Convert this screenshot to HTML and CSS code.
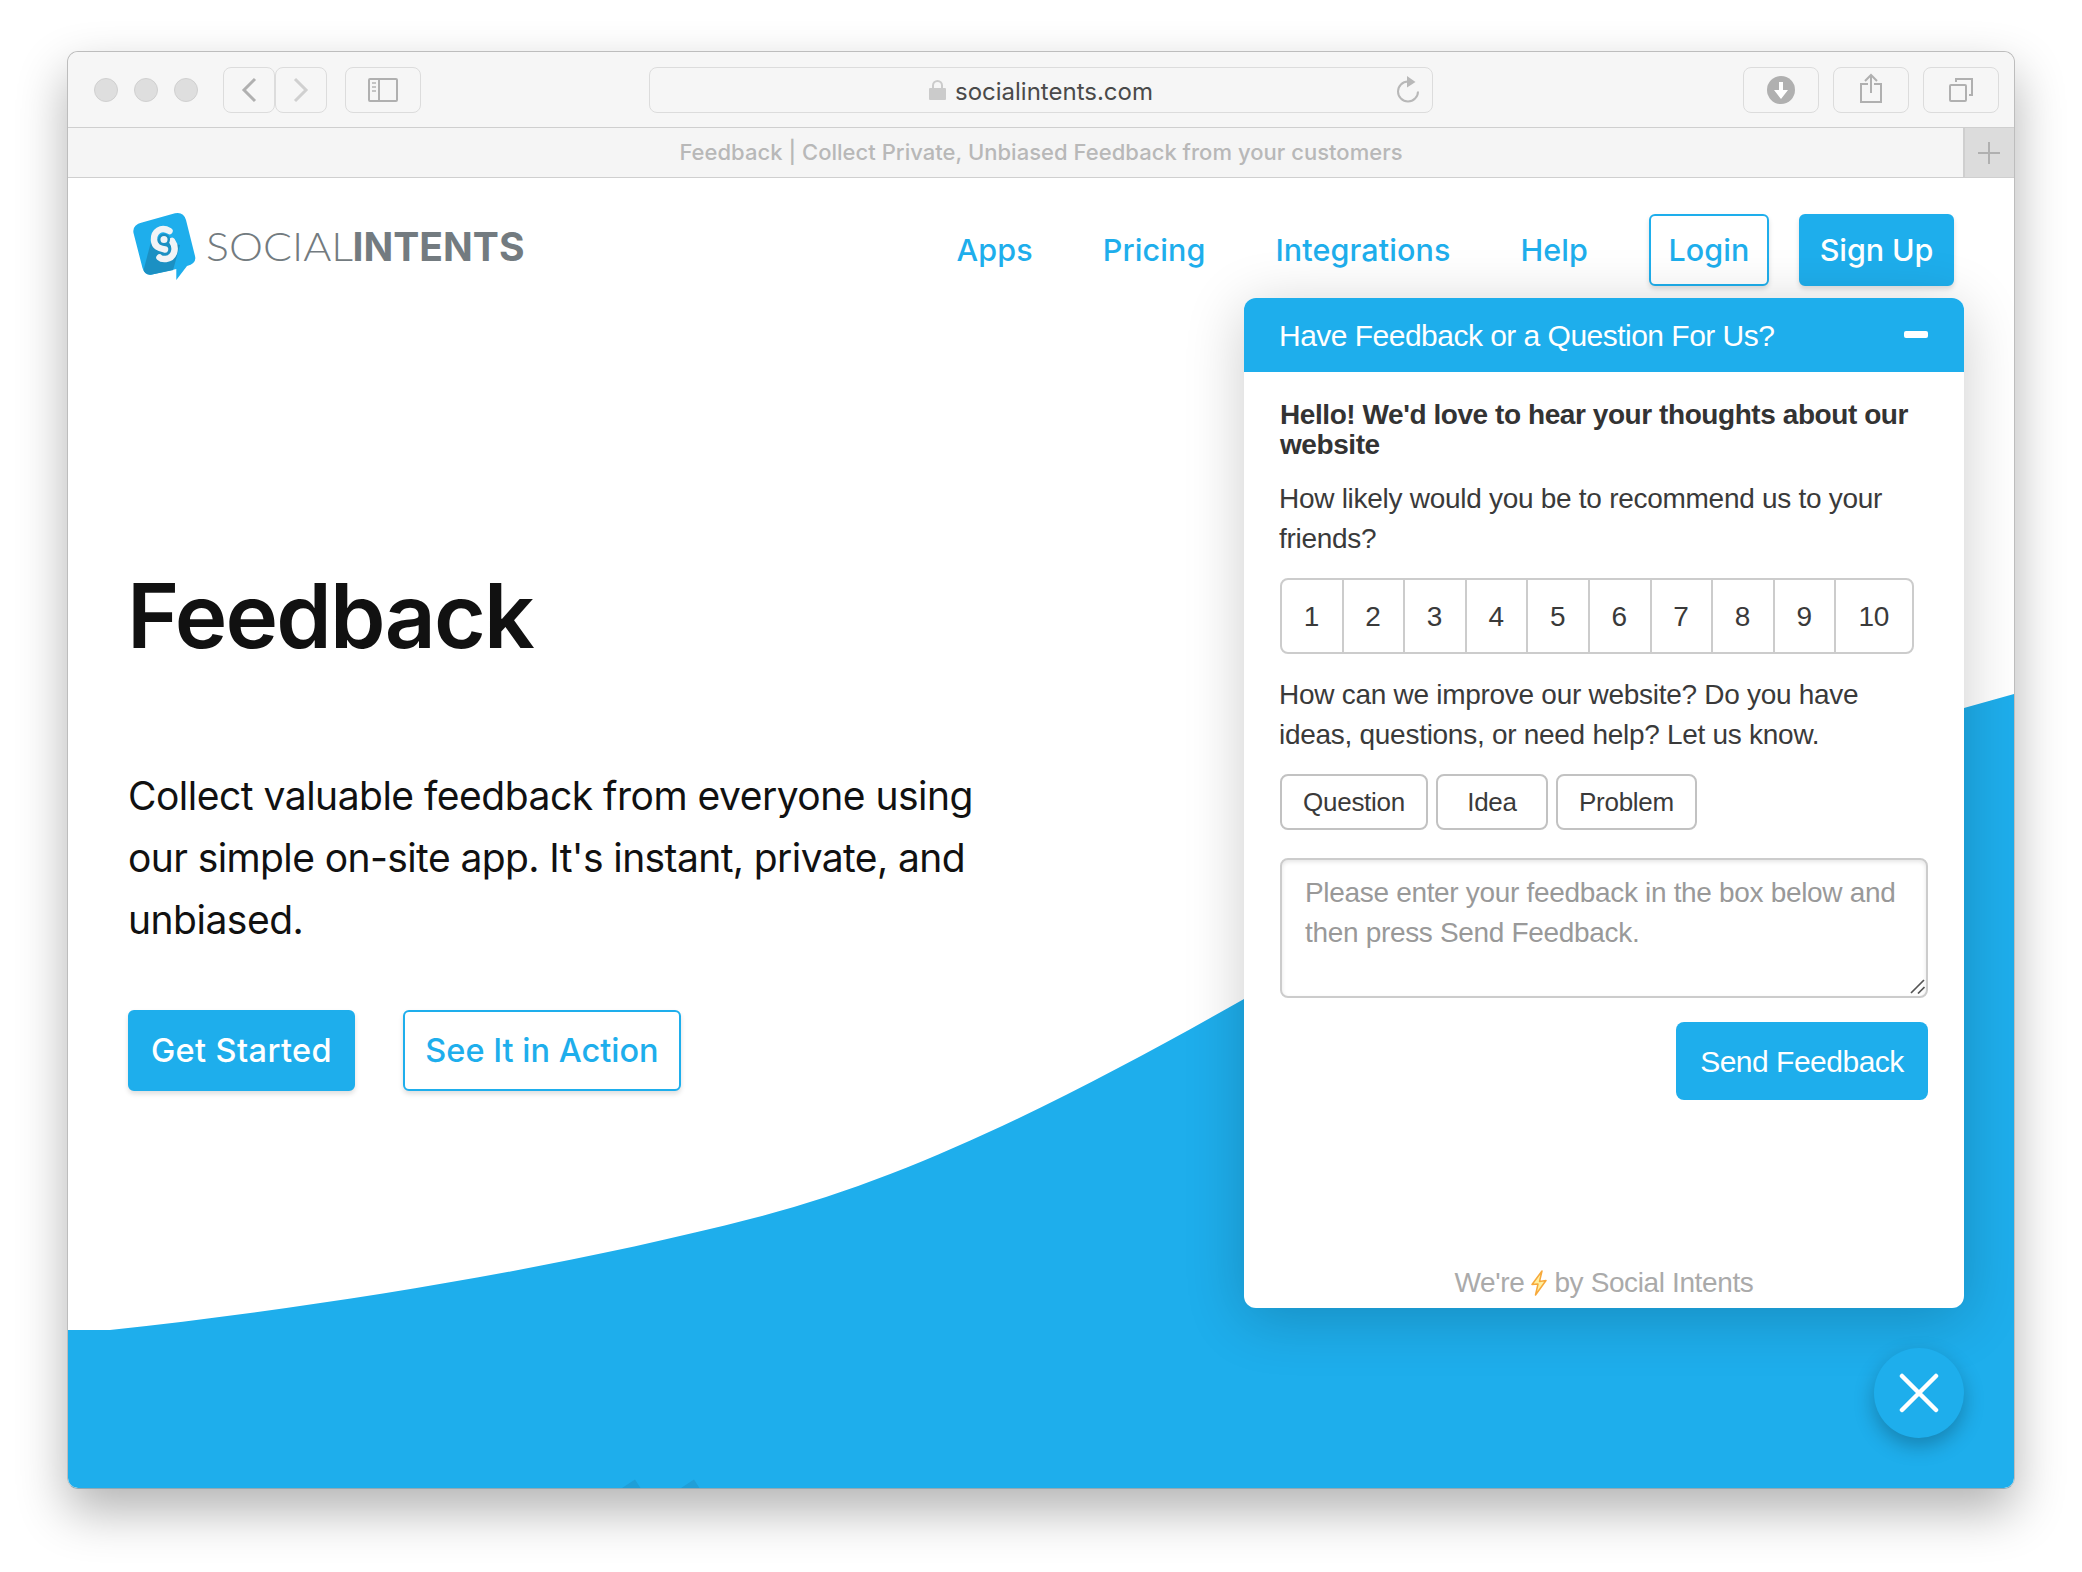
FILE: index.html
```html
<!DOCTYPE html>
<html lang="en">
<head>
<meta charset="utf-8">
<title>Feedback | Collect Private, Unbiased Feedback from your customers</title>
<link rel="stylesheet" href="styles.css">
</head>
<body>
<div class="window">
  <div class="toolbar">
    <div class="lights"><span class="light"></span><span class="light"></span><span class="light"></span></div>
    <div class="history">
      <div class="tool tool-small"><svg width="16" height="26" viewBox="0 0 16 26" fill="none" stroke="#b0b0b0" stroke-width="3"><path d="M14 2 3 13 14 24"/></svg></div>
      <div class="tool tool-small"><svg width="16" height="26" viewBox="0 0 16 26" fill="none" stroke="#d0d0d0" stroke-width="3"><path d="M2 2 13 13 2 24"/></svg></div>
    </div>
    <div class="tool"><svg width="30" height="24" viewBox="0 0 30 24" fill="none" stroke="#b0b0b0" stroke-width="2"><rect x="1" y="1" width="28" height="22" rx="1"/><path d="M11 1V23"/><path d="M4 5h4M4 9h4M4 13h4" stroke="#c4c4c4"/></svg></div>
    <div class="address">
      <svg width="17" height="20" viewBox="0 0 17 20"><path d="M4 9V5.500a4.500 4.500 0 0 1 9 0V9" fill="none" stroke="#cbcbcb" stroke-width="2"/><rect x="0" y="8" width="17" height="12" rx="1" fill="#cbcbcb"/></svg>
      <span class="host">socialintents.com</span>
      <svg class="reload" width="24" height="28" viewBox="0 0 24 28"><path d="M12 5.500A10 10 0 1 0 22 15.500" fill="none" stroke="#b8b8b8" stroke-width="2"/><path d="M11 0 19.500 6 11 11.500z" fill="#b8b8b8"/></svg>
    </div>
    <div class="tools-right">
      <div class="tool"><svg width="28" height="28" viewBox="0 0 28 28"><circle cx="14" cy="14" r="14" fill="#b0b0b0"/><path d="M12 6h4v8h5l-7 9-7-9h5z" fill="#fff"/></svg></div>
      <div class="tool"><svg class="share" width="24" height="30" viewBox="0 0 24 30" fill="none" stroke="#b0b0b0" stroke-width="2"><path d="M9 11H2V29H22V11H15M12 20V1.500M6 8l6-6 6 6"/></svg></div>
      <div class="tool"><svg width="24" height="24" viewBox="0 0 24 24" fill="none" stroke="#b0b0b0" stroke-width="2"><rect x="1" y="7" width="16" height="16" rx="1"/><path d="M7 4V1H23V17H20"/></svg></div>
    </div>
  </div>
  <div class="tabbar">
    <div class="tab">Feedback | Collect Private, Unbiased Feedback from your customers</div>
    <div class="newtab"><svg width="22" height="22" viewBox="0 0 22 22" stroke="#b0b0b0" stroke-width="2"><path d="M0 11H22M11 0V22"/></svg></div>
  </div>

  <div class="page">
    <svg class="wave" width="1946" height="1310" viewBox="68 178 1946 1310">
      <path d="M68 1330H110C330 1306 560 1268 754 1218C920 1176 1090 1086 1244 999C1480 866 1660 790 1964 708L2014 694V1488H68Z" fill="#1eaeec"/>
      <path d="M622 1488 635 1479.500 640.500 1488ZM681 1488 694 1479.500 699.500 1488Z" fill="#1f9fd8"/>
    </svg>

    <header class="header">
      <svg class="logo" width="410" height="72" viewBox="130 210 410 72">
        <defs><clipPath id="tile"><path d="M142 222 175 213.300Q183 211.500 185.500 219L195 256Q197 263.500 188 266L176 269.500 152 274.500Q145 276 142.500 268L133.500 233Q132 225 142 222Z"/></clipPath></defs>
        <path d="M142 222.500 175 213.300Q183.500 211.500 186 220L195 256Q197 263.500 187 266L176.300 280V269L152 274.500Q145 276 142.500 268L133.500 233Q132 225 142 222.500Z" fill="#1eaeec"/>
        <path d="M152 238 142 276 172 274 180 245Z" fill="#1b90c3" clip-path="url(#tile)"/>
        <path d="M169.500 231C161 226 153.500 231.500 154 240C154.500 248 161 248.500 165 249.500" fill="none" stroke="#f0f3f6" stroke-width="6.500" stroke-linecap="round"/>
        <path d="M172 241C177 248 174.500 258 166 259C162 259.500 160.500 258.500 159.500 257.500" fill="none" stroke="#f0f3f6" stroke-width="6.500" stroke-linecap="round"/>
        <circle cx="164" cy="239.500" r="4.800" fill="#f0f3f6" stroke="#1b90c3" stroke-width="2.500"/>
        <text class="logo-thin" x="206" y="260.500" textLength="147" lengthAdjust="spacingAndGlyphs">SOCIAL</text>
        <text class="logo-bold" x="352.500" y="260.500" textLength="172" lengthAdjust="spacingAndGlyphs">INTENTS</text>
      </svg>
      <nav class="nav">
        <a>Apps</a><a>Pricing</a><a>Integrations</a><a>Help</a>
      </nav>
      <a class="btn btn-line login">Login</a>
      <a class="btn btn-fill signup">Sign Up</a>
    </header>

    <section class="hero">
      <h1>Feedback</h1>
      <p>Collect valuable feedback from everyone using<br><span class="tight">our simple on-site app. It's instant, private, and</span><br>unbiased.</p>
      <div class="actions">
        <a class="btn btn-fill start">Get Started</a>
        <a class="btn btn-line action">See It in Action</a>
      </div>
    </section>

    <aside class="panel">
      <div class="panel-head"><span>Have Feedback or a Question For Us?</span><i class="minimize"></i></div>
      <div class="panel-body">
        <p class="hello">Hello! We'd love to hear your thoughts about our website</p>
        <p class="ask">How likely would you be to recommend us to your friends?</p>
        <div class="rating"><span>1</span><span>2</span><span>3</span><span>4</span><span>5</span><span>6</span><span>7</span><span>8</span><span>9</span><span class="ten">10</span></div>
        <p class="ask">How can we improve our website? Do you have ideas, questions, or need help? Let us know.</p>
        <div class="chips"><span class="chip question">Question</span><span class="chip idea">Idea</span><span class="chip problem">Problem</span></div>
        <div class="field">Please enter your feedback in the box below and then press Send Feedback.<svg class="grip" width="15" height="15" viewBox="0 0 15 15" stroke="#555" stroke-width="1.700"><path d="M1 14 14 1M8 14.500 14.500 8"/></svg></div>
        <a class="send">Send Feedback</a>
        <div class="credit"><span>We're</span><svg width="16" height="26" viewBox="0 0 16 26"><path d="M11 1 1 14.500 7 14 4.500 25 15 10.500 8.500 11.500Z" fill="#fff0a0" stroke="#f7a93b" stroke-width="1.500" stroke-linejoin="round"/></svg><span>by Social Intents</span></div>
      </div>
    </aside>
    <div class="close"><svg width="40" height="40" viewBox="0 0 40 40" stroke="#fff" stroke-width="4.500" stroke-linecap="round"><path d="M3 3 37 37M37 3 3 37"/></svg></div>
  </div>
</div>
</body>
</html>
```
FILE: styles.css
```css
* { box-sizing: border-box; }
body { display: flow-root; margin: 0; min-height: 1572px; background: #fff; font-family: Inter, "Liberation Sans", sans-serif; }
svg { display: block; flex: none; }
p, h1 { margin: 0; }

.window {
  width: 1948px; height: 1438px; margin: 51px 0 0 67px;
  border: 1px solid #bdbdbd; border-bottom-color: #8fa9b5; border-radius: 11px; overflow: hidden;
  box-shadow: 0 22px 50px rgba(0, 0, 0, .3);
}

.toolbar {
  display: flex; align-items: center; height: 76px;
  padding: 0 15px 0 26px; background: #f6f6f6; border-bottom: 1px solid #cfcfcf;
}
.lights { display: flex; gap: 16px; }
.light { width: 24px; height: 24px; border-radius: 50%; background: #dedede; border: 1px solid #d0d0d0; }
.history { display: flex; margin: 0 18px 0 25px; }
.tool {
  display: flex; align-items: center; justify-content: center;
  width: 76px; height: 46px; border: 1.500px solid #dcdcdc; border-radius: 8px;
}
.tool-small { width: 52px; }
.share { margin-top: -4px; }
.address {
  position: relative; display: flex; align-items: center; justify-content: center; gap: 9px;
  width: 784px; height: 46px; margin-left: 228px; border: 1.500px solid #dcdcdc; border-radius: 8px;
}
.host { padding-top: 4px; font-size: 24px; line-height: 46px; letter-spacing: 0; color: #4a4a4a; }
.reload { position: absolute; right: 12px; top: 8px; }
.tools-right { display: flex; gap: 14px; margin-left: auto; }

.tabbar { display: flex; height: 50px; background: #f5f5f5; border-bottom: 1px solid #cfcfcf; }
.tab { flex: 1; padding-left: 51px; text-align: center; font-size: 22px; font-weight: 450; line-height: 49px; letter-spacing: .03px; color: #b8b8b8; }
.newtab { display: flex; align-items: center; justify-content: center; width: 51px; padding-right: 2px; background: #dcdcdc; border-left: 2px solid #cfcfcf; }

.page { position: relative; height: 1310px; background: #fff; }
.wave { position: absolute; left: 0; top: 0; }

.header { position: relative; display: flex; padding: 36px 60px 0 62px; color: #1eaeec; font-size: 30.500px; font-weight: 450; letter-spacing: .1px; line-height: 70px; }
.logo { margin-top: -4px; overflow: visible; }
.logo-thin, .logo-bold { fill: #737b80; letter-spacing: 0; }
.logo-thin { font: 300 40px Lato, sans-serif; }
.logo-bold { font: 700 40px Inter, sans-serif; }
.nav { display: flex; gap: 70px; margin: 1px 61px 0 auto; }
.btn {
  display: block; text-align: center; border: 2px solid #1eaeec; border-radius: 6px;
  box-shadow: 0 3px 5px rgba(0, 0, 0, .13);
}
.btn-line { background: #fff; color: #1eaeec; }
.btn-fill { background: #1eaeec; color: #fff; }
.login, .signup { height: 72px; line-height: 68px; }
.login { width: 120px; }
.signup { width: 155px; margin-left: 30px; letter-spacing: -.1px; }

.hero { position: relative; padding: 280px 0 0 60px; color: #111; }
.hero h1 { font-size: 89px; font-weight: 600; line-height: 100px; letter-spacing: -1.800px; margin-left: -1px; }
.hero p { margin-top: 99px; font-size: 39px; line-height: 62px; letter-spacing: -.5px; }
.tight { letter-spacing: -.6px; }
.actions { display: flex; gap: 48px; margin-top: 59px; font-size: 32.500px; font-weight: 450; line-height: 77px; letter-spacing: 0; }
.start { width: 227px; height: 81px; letter-spacing: .4px; }
.action { width: 278px; height: 81px; }

.panel {
  position: absolute; left: 1176px; top: 120px; display: flex; flex-direction: column;
  width: 720px; height: 1010px; border-radius: 12px; background: #fff; overflow: hidden;
  box-shadow: 0 10px 60px rgba(0, 0, 0, .2);
  font-family: "Liberation Sans", Arial, sans-serif; font-size: 28px; line-height: 40px; letter-spacing: -.28px; color: #3a3a3a;
}
.panel-head {
  display: flex; align-items: center; justify-content: space-between; height: 74px; padding: 1px 36px 0 35px;
  background: #1eaeec; color: #fff; font-size: 30px; letter-spacing: -.52px;
}
.minimize { width: 24px; height: 7px; margin-bottom: 3px; border-radius: 2px; background: #fff; }
.panel-body { flex: 1; display: flex; flex-direction: column; padding: 28px 36px 5px; }
.hello { font-weight: 700; line-height: 30px; letter-spacing: -.43px; color: #333; }
.ask { margin: 19px 0 0 -1px; }
.rating { display: flex; width: 634px; height: 76px; margin: 19px 0 2px; border: 2px solid #ccc; border-radius: 8px; line-height: 73px; text-align: center; }
.rating span { width: 61.600px; padding-right: 1px; border-right: 2px solid #ccc; }
.rating .ten { flex: 1; border: 0; }
.chips { display: flex; gap: 8px; margin-top: 19px; }
.chip { height: 56px; border: 2px solid #c2c2c2; border-radius: 8px; text-align: center; font-size: 26px; line-height: 53px; }
.question { width: 148px; }
.idea { width: 112px; }
.problem { width: 141px; }
.field {
  position: relative; height: 140px; margin-top: 28px; padding: 13px 20px 0 23px; color: #999; letter-spacing: -.32px;
  border: 2px solid #ccc; border-radius: 8px; box-shadow: inset 0 2px 4px rgba(0, 0, 0, .1);
}
.grip { position: absolute; right: 1px; bottom: 2px; }
.send { align-self: flex-end; width: 252px; height: 78px; margin-top: 24px; border-radius: 8px; background: #1eaeec; color: #fff; font-size: 30px; line-height: 79px; letter-spacing: -.5px; text-align: center; }
.credit { display: flex; justify-content: center; align-items: center; gap: 7px; margin-top: auto; letter-spacing: -.38px; color: #aaa; }
.close {
  position: absolute; left: 1806px; top: 1170px; display: flex; align-items: center; justify-content: center;
  width: 90px; height: 90px; border-radius: 50%; background: #1eaeec; box-shadow: 0 8px 20px rgba(0, 0, 0, .25);
}
```
